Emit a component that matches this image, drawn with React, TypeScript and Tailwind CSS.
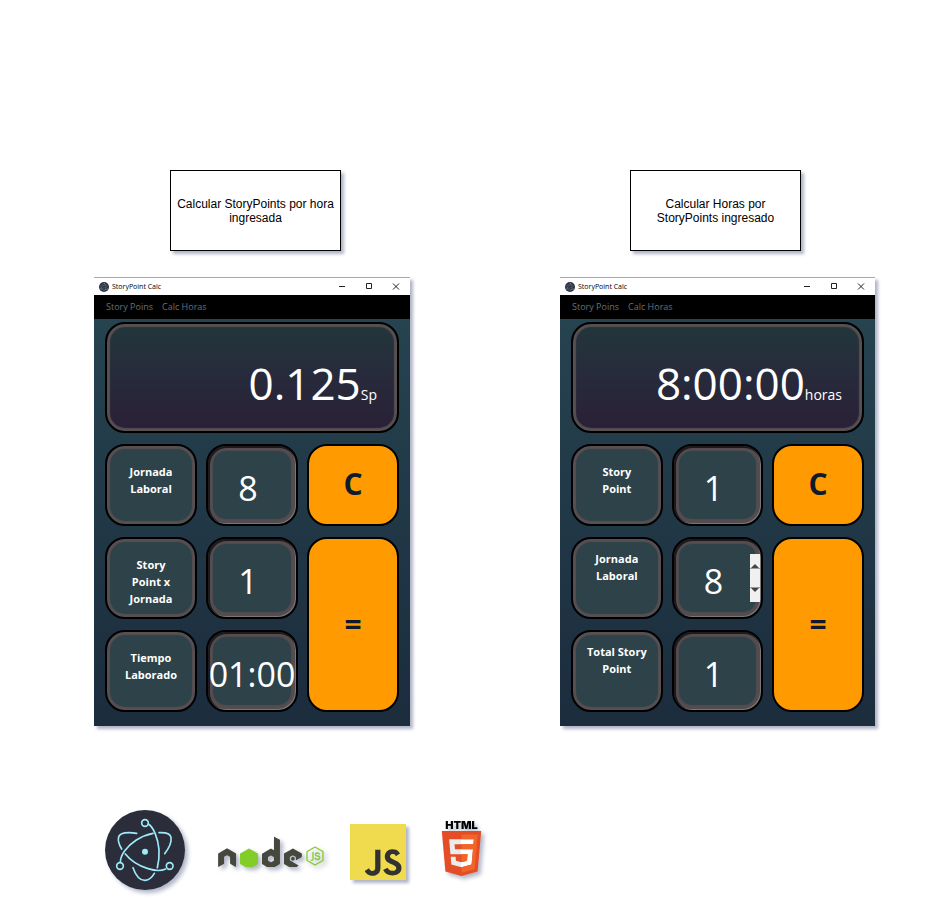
import { useId, useState } from "react";
import type { ReactNode } from "react";
import { FaNode } from "react-icons/fa";
import { SiHtml5, SiJavascript } from "react-icons/si";

type Field = { label: string; value: string; high?: boolean; spinner?: boolean };

const shadow = "shadow-[3px_3px_3px_rgba(61,69,116,0.4)]";
const logoShadow = "drop-shadow-[3px_3px_2px_rgba(61,69,116,0.4)]";

function Caption({ children }: { children: ReactNode }) {
  return (
    <h2
      className={`flex h-[81px] w-[171px] items-center justify-center border border-black bg-white text-center text-[12px] leading-[14px] text-black ${shadow}`}
    >
      {children}
    </h2>
  );
}

function ElectronMark({ className }: { className: string }) {
  return (
    <svg viewBox="30 30 240 240" className={className} aria-hidden="true">
      <circle cx="150" cy="150" r="120" fill="#2b2e3a" />
      <g fill="none" stroke="#9feaf9" strokeWidth="5" strokeLinecap="round">
        <path d="M125 100C98 95 75 98 71 111C68 121 72 134 80 147" />
        <path d="M192 98C212 97 226 102 228 112C230 125 223 143 209 161" />
        <path d="M76 187C76 165 95 139 124 120C140 110 157 103 174 100" />
        <path d="M160 72C176 82 189 115 192 149C193 169 191 188 187 203" />
        <path d="M91 162C106 181 133 198 159 206C178 212 197 214 212 207" />
        <path d="M114 203C123 228 137 242 151 241C161 240 171 232 178 220" />
        <circle cx="150" cy="69" r="10" />
        <circle cx="75" cy="198" r="10" />
        <circle cx="224" cy="198" r="10" />
      </g>
      <circle cx="150" cy="155" r="9" fill="#9feaf9" />
    </svg>
  );
}

function TitleBar() {
  return (
    <header className="flex h-[18px] items-center border-t border-[#a8a8a8] bg-white pr-[10px] pl-[5px]">
      <ElectronMark className="size-[10px]" />
      <span className="ml-[3px] flex-1 text-[7px] leading-[10px] text-black">StoryPoint Calc</span>
      <div className="flex gap-[19px]">
        <button type="button" aria-label="Minimizar">
          <svg viewBox="0 0 8 8" className="size-2" stroke="#222" fill="none">
            <path d="M1 3.500h6" />
          </svg>
        </button>
        <button type="button" aria-label="Maximizar">
          <svg viewBox="0 0 8 8" className="size-2" stroke="#222" fill="none">
            <path d="M1.500 0.500h5v5h-5z" />
          </svg>
        </button>
        <button type="button" aria-label="Cerrar">
          <svg viewBox="0 0 8 8" className="size-2" stroke="#222" fill="none">
            <path d="M1 0.500l6 6M7 0.500l-6 6" />
          </svg>
        </button>
      </div>
    </header>
  );
}

function Spinner({ onStep }: { onStep: (step: number) => void }) {
  return (
    <div className="absolute top-[17px] right-[3px] flex h-[48px] w-[10px] flex-col bg-[#f0f0f0]">
      <button type="button" aria-label="Aumentar" className="flex-1" onClick={() => onStep(1)}>
        <svg viewBox="0 0 10 24" className="h-full w-full">
          <path d="M1 14L5 10L9 14z" fill="#444" />
          <path d="M0 14.500h10" stroke="#999" />
        </svg>
      </button>
      <button type="button" aria-label="Disminuir" className="flex-1" onClick={() => onStep(-1)}>
        <svg viewBox="0 0 10 24" className="h-full w-full">
          <path d="M0 9.500h10" stroke="#999" />
          <path d="M1 10L5 14L9 10z" fill="#444" />
        </svg>
      </button>
    </div>
  );
}

function FieldRow({ label, value, high, spinner }: Field) {
  const id = useId();
  const [text, setText] = useState(value);
  return (
    <>
      <label
        htmlFor={id}
        className={`col-start-1 flex justify-center rounded-[20px] border-2 border-black bg-[#2d4249] text-center text-[11px] leading-[17px] font-bold whitespace-pre-line text-white shadow-[inset_0_0_1px_3px_#574f52] ${
          high ? "pt-[11px]" : "pt-[17px]"
        }`}
      >
        {label}
      </label>
      <div className="relative col-start-2">
        <input
          id={id}
          value={text}
          onChange={(e) => setText(e.target.value)}
          className={`size-full rounded-[20px] border-2 border-black bg-[#2d4249] pt-[6px] text-center text-[34px] text-white shadow-[inset_-1px_-1px_0_0_#77777a,inset_1px_1px_0_1px_#1c1a1c,inset_0_0_1px_5px_#544c4f] outline-none ${
            text.length > 2 ? "px-0" : "pr-[8px]"
          }`}
        />
        {spinner && <Spinner onStep={(step) => setText(String(Number(text) + step))} />}
      </div>
    </>
  );
}

function Calculator({
  result,
  unit,
  fields,
  className,
}: {
  result: string;
  unit: string;
  fields: Field[];
  className: string;
}) {
  return (
    <article className={`${className} font-['Open_Sans','Noto_Sans',sans-serif] ${shadow}`}>
      <TitleBar />
      <nav className="flex h-6 items-center gap-[9px] bg-black px-3 text-[9px] text-[#66717b]">
        <a href="#story-points">Story Poins</a>
        <a href="#horas">Calc Horas</a>
      </nav>
      <div className="grid grid-cols-3 grid-rows-[111px_repeat(3,82px)] gap-x-[9px] gap-y-[11px] bg-linear-to-b from-[#264350] to-[#1b2c3d] px-[11px] pt-[3px] pb-[14px]">
        <output className="col-span-3 flex items-baseline justify-end rounded-[20px] border-2 border-black bg-linear-to-b from-[#22363b] via-[#272a3b] to-[#2a2037] pt-[29px] pr-5 text-white shadow-[inset_0_0_1px_3px_#574f52]">
          <span className="text-[44px] leading-[60px]">{result}</span>
          <span className="text-[14px]">{unit}</span>
        </output>
        <button
          type="button"
          className="col-start-3 row-start-2 rounded-[20px] border-2 border-black bg-[#ff9a00] pb-[2px] text-[30px] leading-none font-bold text-[#0f1b2b]"
        >
          C
        </button>
        <button
          type="button"
          className="col-start-3 row-span-2 row-start-3 rounded-[20px] border-2 border-black bg-[#ff9a00] pb-[2px] text-[30px] leading-none font-bold text-[#0f1b2b]"
        >
          =
        </button>
        {fields.map((field) => (
          <FieldRow key={field.label} {...field} />
        ))}
      </div>
    </article>
  );
}

function NodeLogo() {
  return (
    <div className={`flex w-[107px] ${logoShadow}`} role="img" aria-label="node.js">
      <svg className="absolute size-0" aria-hidden="true">
        <defs>
          <linearGradient id="node-fill" gradientUnits="userSpaceOnUse" x1="0" x2="640" y1="0" y2="0">
            <stop offset="0.245" stopColor="#46483e" />
            <stop offset="0.245" stopColor="#83cd29" />
            <stop offset="0.49" stopColor="#83cd29" />
            <stop offset="0.49" stopColor="#46483e" />
          </linearGradient>
        </defs>
      </svg>
      <div className="h-[34px] w-[84px] overflow-hidden">
        <FaNode className="-mt-1 h-[67px] w-[84px] fill-[url(#node-fill)]" />
      </div>
      <svg viewBox="0 0 18 20" className="mt-[13px] ml-1 h-5 w-[18px]" aria-hidden="true">
        <g fill="none" stroke="#83cd29" strokeWidth="1.300" strokeLinejoin="round">
          <path d="M9 1L17 5.500V14.500L9 19L1 14.500V5.500Z" />
          <path d="M7 6V13Q7 15 4.500 14" />
          <path d="M13.500 8.500Q13 7 11.200 7Q9.200 7 9.300 8.600Q9.300 10 11.300 10Q13.800 10 13.700 11.800Q13.600 13.500 11.400 13.500Q9 13.500 9 11.500" />
        </g>
      </svg>
    </div>
  );
}

function HtmlLogo() {
  return (
    <div className={`flex w-[45px] flex-col items-center ${logoShadow}`}>
      <span className="font-['Inter',sans-serif] text-[11px] leading-[11px] font-black text-black">HTML</span>
      <div className="relative size-[45px]">
        <div className="absolute inset-x-[10px] inset-y-[8px] bg-linear-to-r from-[#ebebeb] from-50% to-white to-50%" />
        <SiHtml5 className="absolute size-full text-[#e44d26]" />
        <SiHtml5 className="absolute size-full text-[#f16529] [clip-path:polygon(50%_8%,86%_8%,79%_85%,50%_93%)]" />
      </div>
    </div>
  );
}

export default function App() {
  return (
    <main className="bg-white pt-[170px] pb-[26px] font-['Liberation_Sans',Arial,sans-serif]">
      <div className="flex justify-between pr-[134px] pl-[170px]">
        <Caption>Calcular StoryPoints por hora ingresada</Caption>
        <Caption>
          Calcular Horas por
          <br />
          StoryPoints ingresado
        </Caption>
      </div>
      <div className="mt-[26px] flex justify-between pr-[60px] pl-[94px]">
        <Calculator
          className="w-[316px]"
          result="0.125"
          unit="Sp"
          fields={[
            { label: "Jornada\nLaboral", value: "8" },
            { label: "Story\nPoint x\nJornada", value: "1" },
            { label: "Tiempo\nLaborado", value: "01:00" },
          ]}
        />
        <Calculator
          className="w-[315px]"
          result="8:00:00"
          unit="horas"
          fields={[
            { label: "Story\nPoint", value: "1" },
            { label: "Jornada\nLaboral", value: "8", high: true, spinner: true },
            { label: "Total Story\nPoint", value: "1", high: true },
          ]}
        />
      </div>
      <footer className="mt-[84px] flex items-center pl-[105px]">
        <ElectronMark className={`size-20 ${logoShadow}`} />
        <div className="ml-[33px]">
          <NodeLogo />
        </div>
        <div className={`mt-1 ml-[25px] bg-[#323330] ${shadow}`} role="img" aria-label="JavaScript">
          <SiJavascript className="size-14 text-[#f0db4f]" />
        </div>
        <div className="mb-1 ml-[33px]">
          <HtmlLogo />
        </div>
      </footer>
    </main>
  );
}
